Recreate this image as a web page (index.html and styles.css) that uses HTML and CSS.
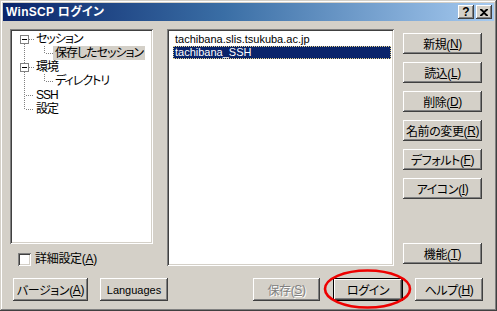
FILE: index.html
```html
<!DOCTYPE html>
<html lang="ja">
<head>
<meta charset="utf-8">
<title>WinSCP ログイン</title>
<link rel="stylesheet" href="styles.css">
</head>
<body>
<div class="window">
  <div class="titlebar">
    <span class="title">WinSCP ログイン</span>
    <div class="tb-btns">
      <span class="tbtn help">?</span>
      <span class="tbtn close"><svg width="8" height="7" viewBox="0 0 8 7"><path d="M0 0h2l2 2 2-2h2v1L5 3.5 8 6v1H6L4 5 2 7H0V6l3-2.5L0 1z" fill="#000"/></svg></span>
    </div>
  </div>

  <div class="main">
    <div class="col-left">
      <div class="tree sunken">
        <div class="row">
          <svg class="lines" width="22" height="14"><g stroke="#808080" fill="none"><path d="M12.5 12v2" stroke-dasharray="1 1"/><path d="M17 7.5h5" stroke-dasharray="1 1"/><rect x="8.5" y="3.5" width="8" height="8" fill="#fff"/></g><path d="M10 7.5h5" stroke="#000"/></svg>
          <span class="label">セッション</span>
        </div>
        <div class="row">
          <svg class="lines" width="41" height="14"><g stroke="#808080" fill="none" stroke-dasharray="1 1"><path d="M12.5 0v14"/><path d="M32.5 0v8"/><path d="M34 7.5h7"/></g></svg>
          <span class="label sel-inactive">保存したセッション</span>
        </div>
        <div class="row">
          <svg class="lines" width="22" height="14"><g stroke="#808080" fill="none"><path d="M12.5 0v3" stroke-dasharray="1 1"/><path d="M12.5 12v2" stroke-dasharray="1 1"/><path d="M17 7.5h5" stroke-dasharray="1 1"/><rect x="8.5" y="3.5" width="8" height="8" fill="#fff"/></g><path d="M10 7.5h5" stroke="#000"/></svg>
          <span class="label">環境</span>
        </div>
        <div class="row">
          <svg class="lines" width="41" height="14"><g stroke="#808080" fill="none" stroke-dasharray="1 1"><path d="M12.5 0v14"/><path d="M32.5 0v8"/><path d="M34 7.5h7"/></g></svg>
          <span class="label">ディレクトリ</span>
        </div>
        <div class="row">
          <svg class="lines" width="22" height="14"><g stroke="#808080" fill="none" stroke-dasharray="1 1"><path d="M12.5 0v14"/><path d="M14 7.5h8"/></g></svg>
          <span class="label">SSH</span>
        </div>
        <div class="row">
          <svg class="lines" width="22" height="14"><g stroke="#808080" fill="none" stroke-dasharray="1 1"><path d="M12.5 0v8"/><path d="M14 7.5h8"/></g></svg>
          <span class="label">設定</span>
        </div>
      </div>
      <div class="check">
        <span class="checkbox"></span>
        <span class="check-label">詳細設定(<u>A</u>)</span>
      </div>
    </div>

    <div class="list sunken">
      <div class="item">tachibana.slis.tsukuba.ac.jp</div>
      <div class="item selected">tachibana_SSH</div>
    </div>

    <div class="col-right">
      <div class="btn side">新規(<u>N</u>)</div>
      <div class="btn side">読込(<u>L</u>)</div>
      <div class="btn side">削除(<u>D</u>)</div>
      <div class="btn side">名前の変更(<u>R</u>)</div>
      <div class="btn side">デフォルト(<u>F</u>)</div>
      <div class="btn side">アイコン(<u>I</u>)</div>
      <div class="spacer"></div>
      <div class="btn side">機能(<u>T</u>)</div>
    </div>
  </div>

  <div class="footer">
    <div class="btn foot w-version">バージョン(<u>A</u>)</div>
    <div class="btn foot w-lang">Languages</div>
    <div class="btn foot w-save disabled">保存(<u>S</u>)</div>
    <div class="btn foot w-login default">ログイン</div>
    <div class="btn foot w-help">ヘルプ(<u>H</u>)</div>
  </div>

  <svg class="mark" width="92" height="42" viewBox="0 0 92 42"><ellipse cx="45.5" cy="21" rx="42.5" ry="18.5" fill="none" stroke="#ee0000" stroke-width="2.6"/></svg>
</div>
</body>
</html>
```

FILE: styles.css
```css
* { box-sizing: border-box; }

html, body {
  margin: 0;
  padding: 0;
  background: #d4d0c8;
}

body {
  font-family: "Liberation Sans", "Noto Sans CJK JP", sans-serif;
  font-size: 12px;
  font-feature-settings: "palt" 1;
  color: #000;
}

.window {
  position: relative;
  width: 497px;
  height: 311px;
  padding: 3px;
  background: #d4d0c8;
  box-shadow:
    inset -1px -1px #404040,
    inset 1px 1px #d4d0c8,
    inset -2px -2px #808080,
    inset 2px 2px #ffffff;
}

.titlebar {
  height: 18px;
  display: flex;
  align-items: center;
  justify-content: space-between;
  padding: 0 2px 0 3px;
  background: linear-gradient(to right, #0a246a 0%, #3a6ea5 45%, #a6caf0 100%);
}

.title {
  color: #fff;
  font-weight: bold;
  font-size: 12px;
  line-height: 18px;
  letter-spacing: 0.3px;
}

.tb-btns {
  display: flex;
  gap: 2px;
}

.tbtn {
  width: 16px;
  height: 14px;
  display: flex;
  align-items: center;
  justify-content: center;
  background: #d4d0c8;
  box-shadow:
    inset -1px -1px #404040,
    inset 1px 1px #ffffff,
    inset -2px -2px #808080,
    inset 2px 2px #d4d0c8;
}

.tbtn.help {
  font-family: "Liberation Sans", sans-serif;
  font-weight: bold;
  font-size: 12px;
  line-height: 14px;
  padding-bottom: 1px;
}

.sunken {
  background: #fff;
  box-shadow:
    inset 1px 1px #808080,
    inset -1px -1px #ffffff,
    inset 2px 2px #404040,
    inset -2px -2px #d4d0c8;
}

.main {
  display: flex;
  margin-top: 8px;
  padding-left: 7px;
  height: 237px;
}

.col-left {
  width: 143px;
  display: flex;
  flex-direction: column;
}

.tree {
  height: 216px;
  padding: 3px 2px 2px 2px;
}

.row {
  display: flex;
  height: 14px;
  align-items: center;
}

.lines {
  flex: none;
  display: block;
}

.label {
  padding: 0 2px;
  line-height: 14px;
  height: 14px;
  white-space: nowrap;
  letter-spacing: -1px;
}

.sel-inactive {
  background: #d4d0c8;
}

.check {
  display: flex;
  align-items: center;
  margin-top: 9px;
  padding-left: 8px;
  gap: 4px;
}

.checkbox {
  width: 13px;
  height: 13px;
  background: #fff;
  box-shadow:
    inset 1px 1px #808080,
    inset -1px -1px #ffffff,
    inset 2px 2px #404040,
    inset -2px -2px #d4d0c8;
}

.check-label {
  line-height: 13px;
  letter-spacing: -0.3px;
}

.list {
  width: 227px;
  margin-left: 14px;
  padding: 4px 3px 2px 6px;
  font-size: 11px;
}

.item {
  height: 13px;
  line-height: 13px;
  padding-left: 2px;
  white-space: nowrap;
}

.item.selected {
  background: #0a246a;
  color: #fff;
  outline: 1px dotted #e8d48a;
  outline-offset: -1px;
}

.col-right {
  width: 79px;
  margin-left: 9px;
  display: flex;
  flex-direction: column;
  gap: 8px;
  padding: 4px 0 2px;
}

.spacer {
  flex: 1;
}

.btn {
  display: flex;
  align-items: center;
  justify-content: center;
  background: #d4d0c8;
  white-space: nowrap;
  letter-spacing: -0.4px;
  box-shadow:
    inset -1px -1px #404040,
    inset 1px 1px #ffffff,
    inset -2px -2px #808080,
    inset 2px 2px #d4d0c8;
}

.btn.side {
  height: 21px;
}

.footer {
  display: flex;
  margin-top: 12px;
  padding-left: 10px;
}

.btn.foot {
  height: 23px;
}

.w-version { width: 75px; }
.w-lang { width: 68px; margin-left: 12px; font-size: 11px; letter-spacing: 0; }
.w-save { width: 67px; margin-left: 85px; }
.w-login { width: 70px; margin-left: 13px; }
.w-help { width: 68px; margin-left: 12px; }

.btn.disabled {
  color: #808080;
  text-shadow: 1px 1px #ffffff;
}

.btn.default {
  box-shadow:
    inset -1px -1px #000000,
    inset 1px 1px #000000,
    inset -2px -2px #404040,
    inset 2px 2px #ffffff,
    inset -3px -3px #808080;
}

.mark {
  position: absolute;
  left: 322px;
  top: 268px;
}
```
